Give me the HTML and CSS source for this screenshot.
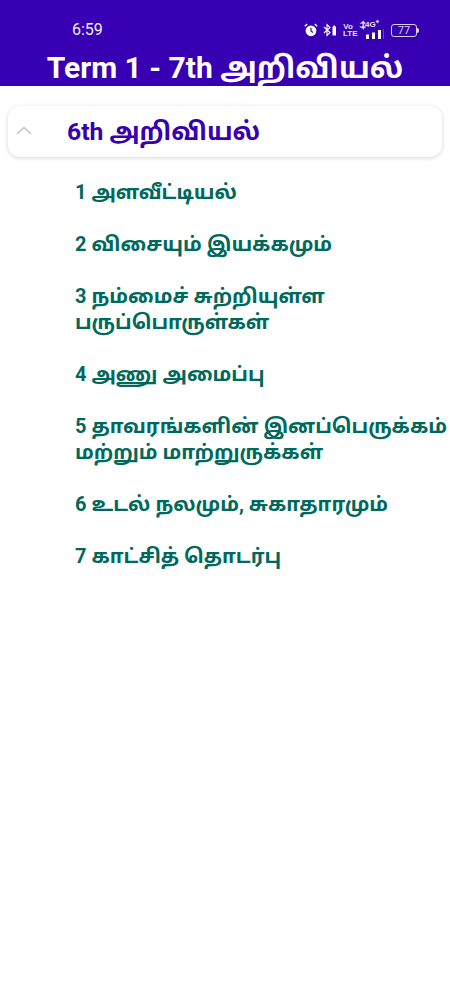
FILE: index.html
```html
<!DOCTYPE html>
<html lang="ta">
<head>
<meta charset="utf-8">
<title>Term 1 - 7th அறிவியல்</title>
<link rel="stylesheet" href="styles.css">
</head>
<body>
<header class="appbar">
  <div class="status">
    <span class="time">6:59</span>
    <div class="status-icons">
      <svg class="ic-alarm" viewBox="0 0 14 14" width="14" height="14"><circle cx="7" cy="7.800" r="5.400" fill="#fff"/><path d="M7 4.800V8l2 1.400" fill="none" stroke="#3700b3" stroke-width="1.200"/><path d="M.8 3.200 3.200 1M13.200 3.200 10.800 1" stroke="#fff" stroke-width="1.300" fill="none"/></svg>
      <svg class="ic-bt" viewBox="0 0 15 14" width="15" height="14"><path d="M1 4l6 5.500-3 3V1.500l3 3-6 5.500" fill="none" stroke="#fff" stroke-width="1.100"/><path d="M9.500 5.500V3.500h1V2.500h1.500v1h1v9h-3.500z" fill="#fff"/></svg>
      <span class="volte">Vo<br>LTE</span>
      <div class="net">
        <span class="net-label">⬍4G⁺</span>
        <svg viewBox="0 0 24 10" width="24" height="10"><path d="M6 5.500h3V10H6zM12 3.500h3V10h-3zM18 1h3v9h-3z" fill="#fff"/><path d="M23 0h1v10h-1z" fill="#fff" opacity=".25"/></svg>
      </div>
      <div class="battery"><span class="batt-num">77</span></div>
    </div>
  </div>
  <h1 class="title">Term 1 - 7th அறிவியல்</h1>
</header>
<main>
  <section class="card">
    <svg class="chev" viewBox="0 0 16 9" width="16" height="9"><path d="M1 8 8 1.500 15 8" fill="none" stroke="#c4c4c4" stroke-width="1.600"/></svg>
    <h2 class="card-title">6th அறிவியல்</h2>
  </section>
  <ul class="list">
    <li>1 அளவீட்டியல்</li>
    <li>2 விசையும் இயக்கமும்</li>
    <li>3 நம்மைச் சுற்றியுள்ள பருப்பொருள்கள்</li>
    <li>4 அணு அமைப்பு</li>
    <li>5 தாவரங்களின் இனப்பெருக்கம் மற்றும் மாற்றுருக்கள்</li>
    <li>6 உடல் நலமும், சுகாதாரமும்</li>
    <li>7 காட்சித் தொடர்பு</li>
  </ul>
</main>
</body>
</html>
```
FILE: styles.css
```css
* { box-sizing: border-box; }
html, body { margin: 0; padding: 0; background: #fff; }
body { font-family: Roboto, "Noto Sans Tamil", "Noto Sans", sans-serif; width: 450px; overflow-x: hidden; }
.appbar { background: #3700b3; height: 86px; color: #fff; overflow: hidden; }
.status { height: 50px; padding: 20px 33px 0 72px; display: flex; justify-content: space-between; align-items: flex-start; }
.time { font-size: 16px; line-height: 20px; color: #f2eefb; }
.status-icons { display: flex; align-items: center; gap: 6px; height: 20px; }
.ic-alarm { margin-right: -1px; }
.volte { font: 700 8px/7px "Liberation Sans", sans-serif; color: #e6e0f6; text-align: center; width: 10px; margin-left: -1px; }
.net { position: relative; width: 24px; height: 18px; margin-left: 1px; }
.net-label { position: absolute; left: 0; top: -1px; font: 700 8px/9px "Liberation Sans", sans-serif; color: #e6e0f6; white-space: nowrap; }
.net svg { position: absolute; left: 0; top: 8px; }
.battery { width: 26px; height: 13px; border: 1px solid #d8d0f0; border-radius: 3px; margin-left: 1px; display: flex; align-items: center; justify-content: center; position: relative; }
.battery::after { content: ""; position: absolute; right: -3px; top: 3px; width: 2px; height: 5px; background: #d8d0f0; border-radius: 0 2px 2px 0; }
.batt-num { font-size: 11px; line-height: 11px; color: #d8d0f0; }
.title { margin: 0; font-size: 30px; font-weight: 700; line-height: 35px; text-align: center; white-space: nowrap; }
.card { margin: 20px 8px 0; height: 51px; background: #fff; border-radius: 12px; box-shadow: 0 1px 4px rgba(0,0,0,.17); display: flex; align-items: center; position: relative; padding: 1px 0 0 59px; }
.chev { position: absolute; left: 8px; top: 20px; }
.card-title { margin: 0; font-size: 24.700px; font-weight: 700; line-height: 32px; color: #3700b3; }
.list { list-style: none; margin: 22px 0 0; padding: 0 0 0 75px; display: flex; flex-direction: column; gap: 26px; }
.list li { font-size: 20px; font-weight: 700; line-height: 26px; color: #00695c; }
```
